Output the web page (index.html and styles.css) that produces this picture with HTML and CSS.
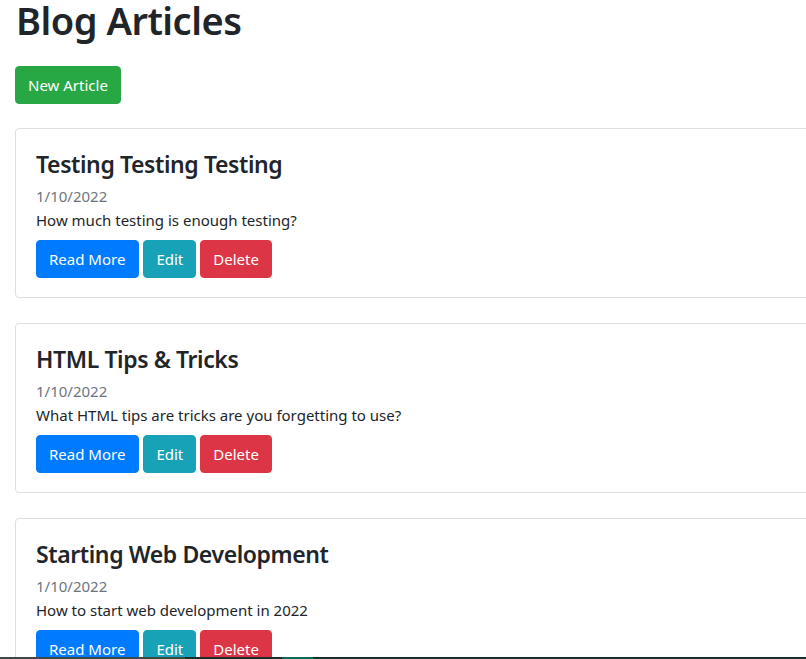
FILE: index.html
```html
<!DOCTYPE html>
<html lang="en">
<head>
<meta charset="utf-8">
<title>Blog Articles</title>
<link rel="stylesheet" href="styles.css">
</head>
<body>
<main class="page">
  <h1 class="page-title">Blog Articles</h1>
  <a class="btn btn-success" href="#">New Article</a>
  <section class="articles">
    <article class="card">
      <h2 class="card-title">Testing Testing Testing</h2>
      <div class="card-date">1/10/2022</div>
      <p class="card-text">How much testing is enough testing?</p>
      <div class="actions">
        <a class="btn btn-primary" href="#">Read More</a>
        <a class="btn btn-info" href="#">Edit</a>
        <button class="btn btn-danger" type="button">Delete</button>
      </div>
    </article>
    <article class="card">
      <h2 class="card-title">HTML Tips &amp; Tricks</h2>
      <div class="card-date">1/10/2022</div>
      <p class="card-text">What HTML tips are tricks are you forgetting to use?</p>
      <div class="actions">
        <a class="btn btn-primary" href="#">Read More</a>
        <a class="btn btn-info" href="#">Edit</a>
        <button class="btn btn-danger" type="button">Delete</button>
      </div>
    </article>
    <article class="card">
      <h2 class="card-title">Starting Web Development</h2>
      <div class="card-date">1/10/2022</div>
      <p class="card-text">How to start web development in 2022</p>
      <div class="actions">
        <a class="btn btn-primary" href="#">Read More</a>
        <a class="btn btn-info" href="#">Edit</a>
        <button class="btn btn-danger" type="button">Delete</button>
      </div>
    </article>
  </section>
</main>
<div class="taskbar">
  <span class="tb-a"></span><span class="tb-b"></span><span class="tb-c"></span><span class="tb-d"></span>
</div>
</body>
</html>
```
FILE: styles.css
```css
* { box-sizing: border-box; }
html, body {
  margin: 0;
  padding: 0;
  overflow: hidden;
  background: #fff;
}
body {
  font-family: "Noto Sans", "Open Sans", sans-serif;
  font-size: 15px;
  line-height: 24px;
  color: #212529;
}
.page {
  width: 1140px;
  padding: 0 15px;
}
.page-title {
  margin: 0 0 25px 1px;
  font-size: 38px;
  font-weight: 600;
  letter-spacing: -0.5px;
  line-height: 41px;
}
.btn {
  display: inline-block;
  padding: 6px 12px;
  border: 1px solid transparent;
  border-radius: 4px;
  font-family: inherit;
  font-size: 15px;
  line-height: 24px;
  color: #fff;
  text-decoration: none;
  cursor: pointer;
  vertical-align: top;
}
.btn-success { background: #28a745; border-color: #28a745; }
.btn-primary { background: #007bff; border-color: #007bff; padding: 6px 13px 6px 12px; }
.btn-info { background: #17a2b8; border-color: #17a2b8; }
.btn-danger { background: #dc3545; border-color: #dc3545; }
.articles {
  display: flex;
  flex-direction: column;
  gap: 25px;
  margin-top: 24px;
}
.card {
  border: 1px solid rgba(0, 0, 0, 0.125);
  border-radius: 4px;
  padding: 20px 20px 19px;
  height: 170px;
}
.card-title {
  margin: 0 0 5px;
  font-size: 23px;
  font-weight: 600;
  letter-spacing: -0.4px;
  line-height: 30px;
}
.card-date {
  color: #6c757d;
}
.card-text {
  margin: 0 0 8px;
}
.actions {
  display: flex;
  gap: 4px;
}
.taskbar {
  position: fixed;
  left: 0;
  right: 0;
  bottom: 0;
  height: 2px;
  display: flex;
}
.tb-a { width: 185px; background: #3b4a47; }
.tb-b { width: 97px; background: #1b2c29; }
.tb-c { width: 31px; background: #0d6b5a; }
.tb-d { flex: 1; background: #172f2b; }
```
